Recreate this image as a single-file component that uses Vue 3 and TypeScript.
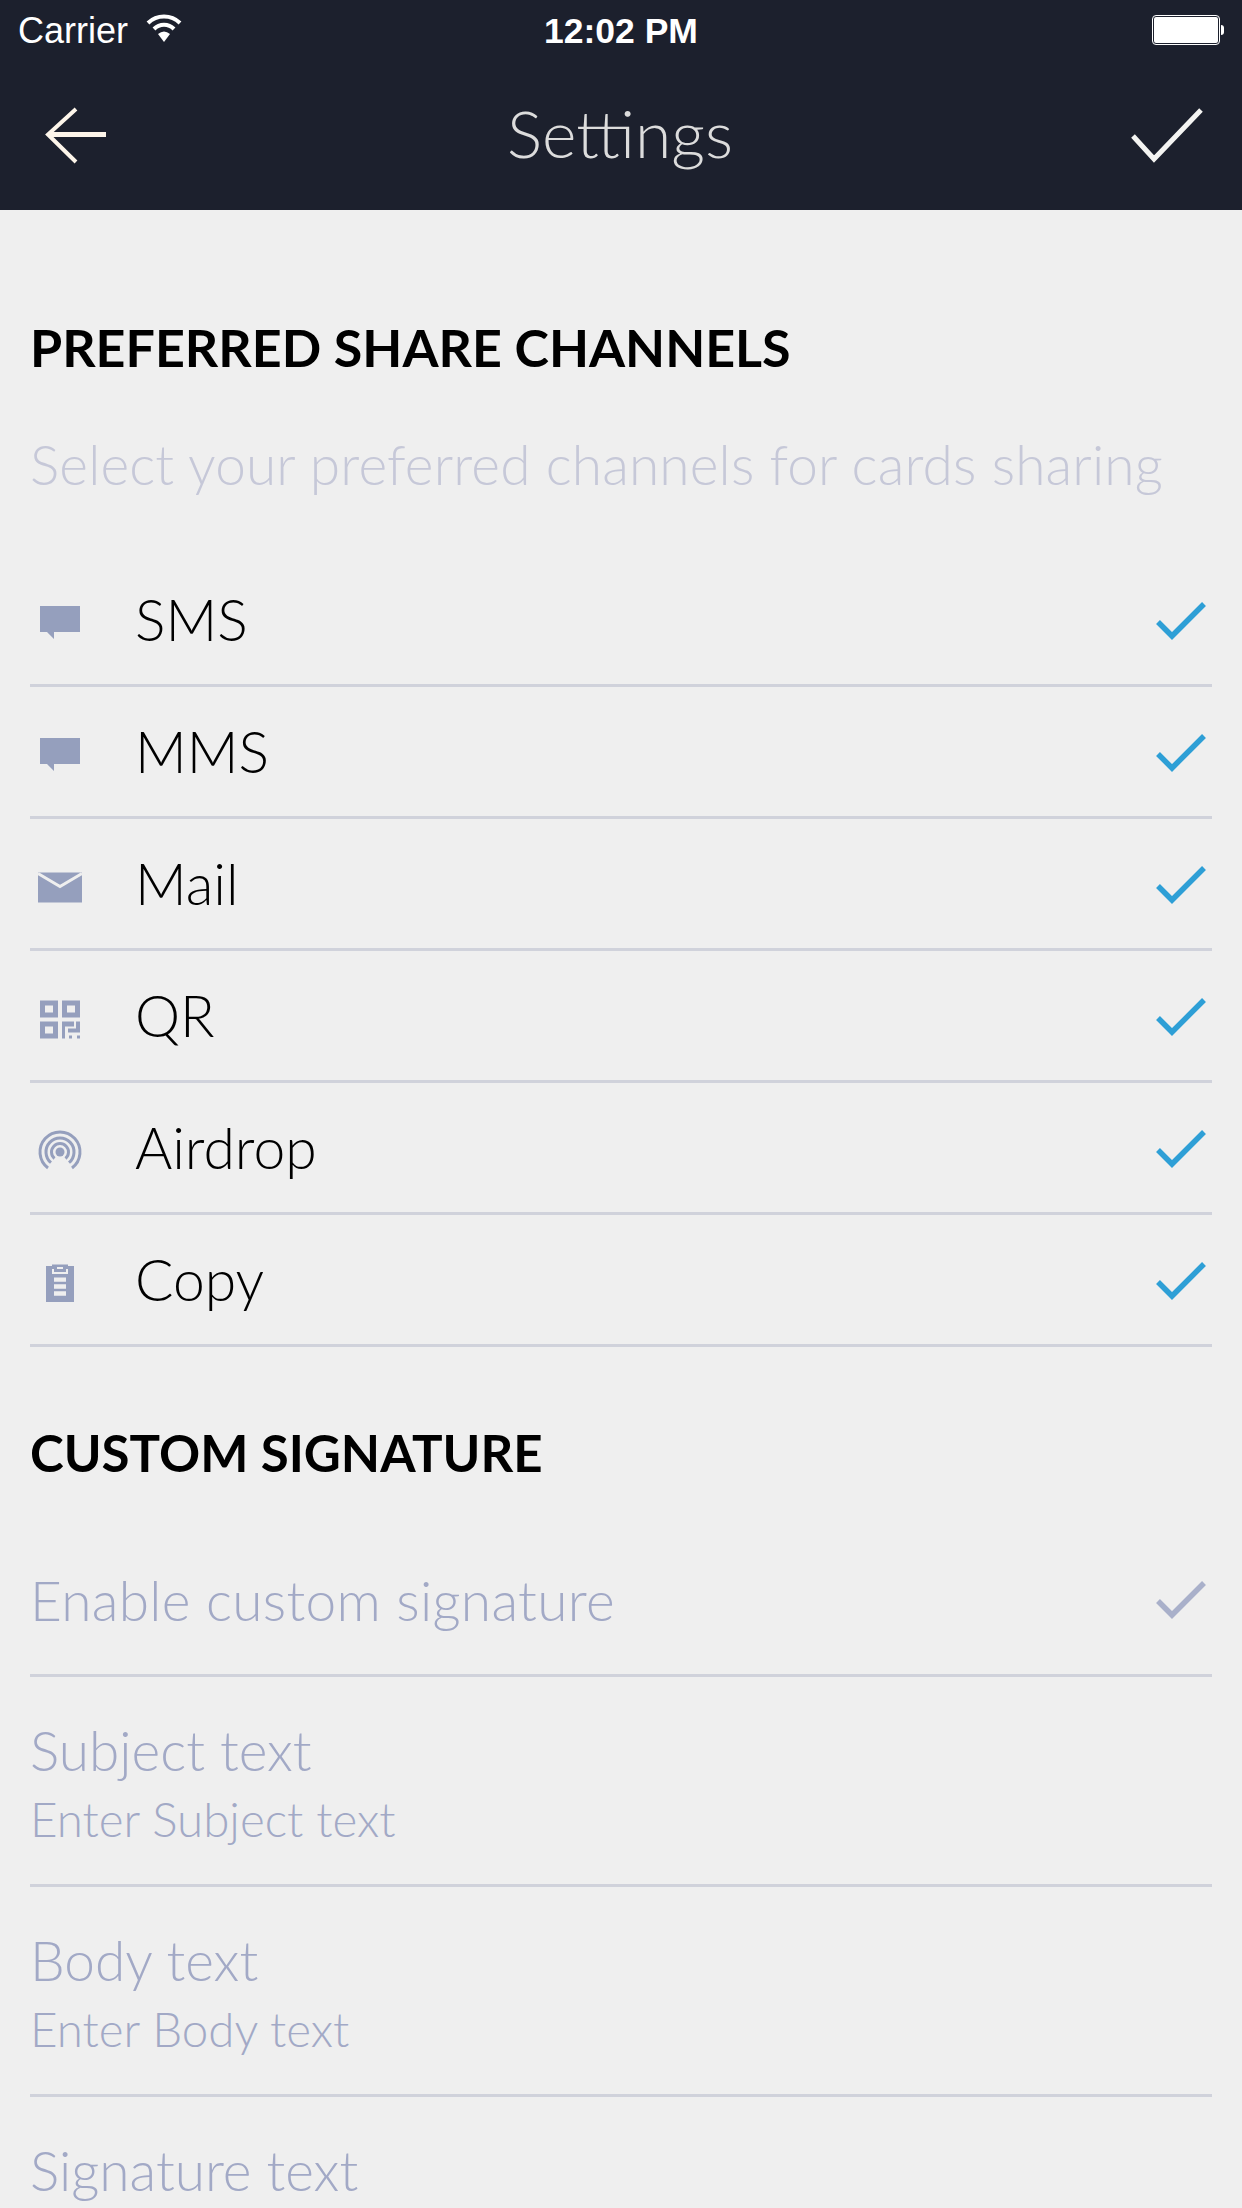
<template>
  <div class="screen">
    <div class="topbar">
      <div class="status-bar">
        <div class="status-left">
          <span>Carrier</span>
          <svg class="wifi" width="38" height="28" viewBox="0 0 38 28">
            <path d="M3 9 A23 23 0 0 1 35 9" fill="none" stroke="#fff" stroke-width="4" />
            <path d="M9 15 A14 14 0 0 1 29 15" fill="none" stroke="#fff" stroke-width="4" />
            <path d="M13 20 Q19 15 25 20 L19 28 Z" fill="#fff" />
          </svg>
        </div>
        <div class="status-time">12:02 PM</div>
        <div class="status-right">
          <div class="battery"></div>
          <div class="battery-tip"></div>
        </div>
      </div>
      <div class="nav">
        <svg class="nav-icon" width="64" height="60" viewBox="0 0 64 60">
          <path d="M62 27.500 H6" stroke="#fdf5ea" stroke-width="5" fill="none" />
          <path d="M32 2 L4 27.500 L32 55" stroke="#fdf5ea" stroke-width="4" fill="none" />
        </svg>
        <div class="nav-title">Settings</div>
        <svg class="nav-icon" width="74" height="60" viewBox="0 0 74 60">
          <path d="M3 29 L24 52 L71 3" stroke="#f4f4f2" stroke-width="5" fill="none" />
        </svg>
      </div>
    </div>

    <div class="content">
      <h2 class="section-title first">PREFERRED SHARE CHANNELS</h2>
      <p class="hint">Select your preferred channels for cards sharing</p>

      <div class="row" v-for="c in channels" :key="c.label">
        <div class="row-icon">
          <svg width="60" height="44" viewBox="0 0 60 44">
            <template v-if="c.icon === 'chat'">
              <path d="M10 8 H50 V34 H24 V41 L17 34 H10 Z" fill="#959fbd" />
            </template>
            <template v-else-if="c.icon === 'mail'">
              <path d="M8 10.500 H52 V40.500 H8 Z" fill="#959fbd" />
              <path d="M8 11.500 L30 24.500 L52 11.500" stroke="#efefef" stroke-width="3" fill="none" />
            </template>
            <template v-else-if="c.icon === 'qr'">
              <g transform="translate(0 3.500)">
                <path fill-rule="evenodd" fill="#959fbd" d="M10 3 H28 V20 H10 Z M15 8 V15 H23 V8 Z M32 3 H50 V20 H32 Z M37 8 V15 H45 V8 Z M10 24 H28 V41 H10 Z M15 29 V36 H23 V29 Z" />
                <path fill="#959fbd" d="M32 24 H44 V29 H35 V41 H32 Z M46 24 H50 V35 H38 V31 H46 Z M39 38 H42 V41 H39 Z M47 38 H50 V41 H47 Z" />
              </g>
            </template>
            <template v-else-if="c.icon === 'air'">
              <circle cx="30" cy="26" r="4.500" fill="#959fbd" />
              <g fill="none" stroke="#959fbd" stroke-width="3">
                <path d="M24.500 32.500 A8.500 8.500 0 1 1 35.500 32.500" />
                <path d="M21 36.700 A14 14 0 1 1 39 36.700" />
                <path d="M18 42 A20 20 0 1 1 42 42" />
              </g>
            </template>
            <template v-else>
              <path d="M16 8 H22 V6.500 H38 V8 H44 V44 H16 Z" fill="#959fbd" />
              <path d="M23 11 V15 H37 V11 M27 10 H33" stroke="#efefef" stroke-width="2" fill="none" />
              <path d="M24 21.700 H36 M24 28.500 H36 M24 35.500 H36" stroke="#efefef" stroke-width="4.300" />
            </template>
          </svg>
        </div>
        <div class="row-label">{{ c.label }}</div>
        <svg class="tick" width="50" height="38" viewBox="0 0 50 38">
          <path d="M2 20 L16 34 L48 2" stroke="#2e9fd6" stroke-width="5.500" fill="none" />
        </svg>
      </div>

      <h2 class="section-title second">CUSTOM SIGNATURE</h2>

      <div class="row sig-toggle">
        <div class="muted-label">Enable custom signature</div>
        <svg class="tick" width="50" height="38" viewBox="0 0 50 38">
          <path d="M2 20 L16 34 L48 2" stroke="#a9b0ca" stroke-width="5.500" fill="none" />
        </svg>
      </div>
      <div class="field" v-for="f in fields" :key="f">
        <div class="muted-label">{{ f }}</div>
        <div class="placeholder">Enter {{ f }}</div>
      </div>
      <div class="field last">
        <div class="muted-label">Signature text</div>
      </div>
    </div>
  </div>
</template>

<script setup lang="ts">
interface Channel {
  label: string
  icon: 'chat' | 'mail' | 'qr' | 'air' | 'copy'
}

const channels: Channel[] = [
  { label: 'SMS', icon: 'chat' },
  { label: 'MMS', icon: 'chat' },
  { label: 'Mail', icon: 'mail' },
  { label: 'QR', icon: 'qr' },
  { label: 'Airdrop', icon: 'air' },
  { label: 'Copy', icon: 'copy' }
]

const fields = ['Subject text', 'Body text']
</script>

<style>
html,
body {
  margin: 0;
  background: #efefef;
}
</style>

<style scoped>
.screen {
  width: 1242px;
  height: 2208px;
  overflow: hidden;
  background: #efefef;
  font-family: Lato, "Open Sans", sans-serif;
}

.topbar {
  height: 210px;
  background: #1c202d;
  color: #fff;
}

.status-bar {
  height: 60px;
  padding: 2px 18px 0;
  box-sizing: border-box;
  display: grid;
  grid-template-columns: 1fr auto 1fr;
  align-items: center;
  font-family: "Liberation Sans", sans-serif;
  font-size: 36px;
}

.status-left {
  display: flex;
  align-items: center;
  gap: 17px;
}

.wifi {
  margin-top: -6px;
}

.status-time {
  font-weight: 700;
  font-size: 35.500px;
}

.status-right {
  display: flex;
  align-items: center;
  justify-content: flex-end;
  margin-top: -2px;
}

.battery {
  width: 64px;
  height: 26px;
  background: #fff;
  border: 1px solid #1c202d;
  outline: 1px solid #fff;
  border-radius: 3px;
}

.battery-tip {
  width: 3px;
  height: 10px;
  margin-left: 2px;
  background: #fff;
  border-radius: 0 3px 3px 0;
}

.nav {
  height: 150px;
  padding: 3px 38px 0 44px;
  box-sizing: border-box;
  display: flex;
  align-items: center;
  justify-content: space-between;
}

.nav-icon {
  display: block;
}

.nav-title {
  font-size: 66px;
  font-weight: 300;
  color: #dcdcdc;
  margin: -8px 0 0 2px;
}

.content {
  padding: 0 30px;
}

.section-title {
  margin: 0;
  font-size: 52px;
  font-weight: 700;
  line-height: 60px;
  color: #000;
}

.section-title.first {
  padding-top: 107px;
}

.section-title.second {
  padding-top: 76px;
  padding-bottom: 40px;
  font-size: 51px;
}

.hint {
  margin: 0;
  padding-top: 57px;
  height: 178px;
  box-sizing: border-box;
  font-size: 55px;
  font-weight: 300;
  line-height: 60px;
  letter-spacing: 0.15px;
  color: #c6c8d8;
}

.row {
  height: 132px;
  box-sizing: border-box;
  border-bottom: 3px solid #d0d2db;
  display: flex;
  align-items: center;
  padding-right: 6px;
}

.row-icon {
  width: 105px;
  flex: none;
}

.row-icon svg {
  display: block;
  overflow: visible;
}

.row-label {
  flex: 1;
  font-size: 57px;
  font-weight: 300;
  color: #000;
  margin-top: -2px;
}

.tick {
  margin-top: 2px;
}

.row.sig-toggle {
  height: 154px;
  justify-content: space-between;
}

.sig-toggle .muted-label {
  letter-spacing: 0.3px;
  margin-top: 2px;
}

.muted-label {
  font-size: 55px;
  font-weight: 300;
  line-height: 62px;
  color: #a2a9c6;
}

.field {
  height: 210px;
  box-sizing: border-box;
  padding-top: 42px;
  border-bottom: 3px solid #d0d2db;
}

.field.last {
  border-bottom: none;
}

.placeholder {
  margin-top: 11px;
  font-size: 47.500px;
  font-weight: 300;
  line-height: 54px;
  color: #a2a9c6;
}
</style>
